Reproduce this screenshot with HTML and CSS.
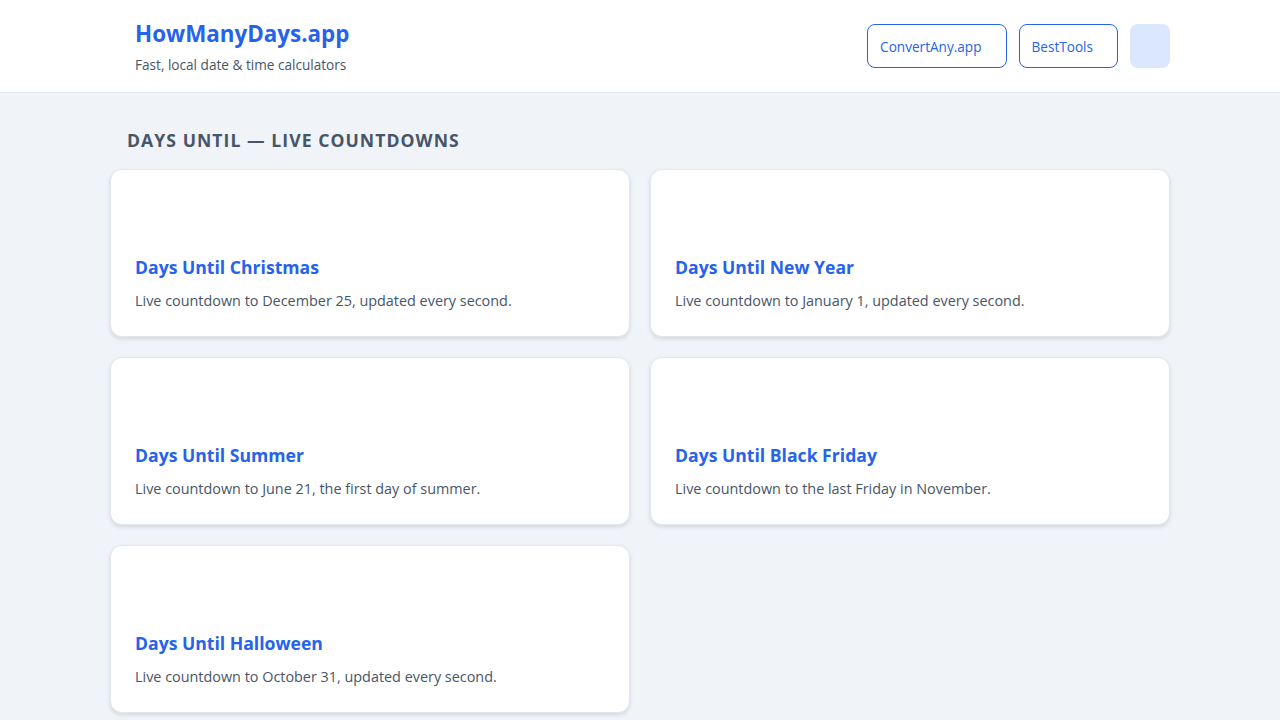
FILE: index.html
```html
<!DOCTYPE html>
<html lang="en">
<head>
    <meta charset="UTF-8">
    <meta name="viewport" content="width=device-width, initial-scale=1.0">
    <title>HowManyDays.app</title>
    <link rel="stylesheet" href="styles.css">
</head>
<body>
    <header class="site-header">
        <div class="header-inner">
            <div class="brand">
                <a class="brand-title" href="#">HowManyDays.app</a>
                <p class="brand-tagline">Fast, local date &amp; time calculators</p>
            </div>
            <nav class="header-nav">
                <a class="nav-link" href="#">ConvertAny.app</a>
                <a class="nav-link" href="#">BestTools</a>
                <button class="theme-toggle" aria-label="Toggle theme"></button>
            </nav>
        </div>
    </header>

    <main class="container">
        <h2 class="section-title">Days Until — Live Countdowns</h2>
        <div class="card-grid">
            <a class="card" href="#">
                <h3 class="card-title">Days Until Christmas</h3>
                <p class="card-desc">Live countdown to December 25, updated every second.</p>
            </a>
            <a class="card" href="#">
                <h3 class="card-title">Days Until New Year</h3>
                <p class="card-desc">Live countdown to January 1, updated every second.</p>
            </a>
            <a class="card" href="#">
                <h3 class="card-title">Days Until Summer</h3>
                <p class="card-desc">Live countdown to June 21, the first day of summer.</p>
            </a>
            <a class="card" href="#">
                <h3 class="card-title">Days Until Black Friday</h3>
                <p class="card-desc">Live countdown to the last Friday in November.</p>
            </a>
            <a class="card" href="#">
                <h3 class="card-title">Days Until Halloween</h3>
                <p class="card-desc">Live countdown to October 31, updated every second.</p>
            </a>
        </div>
    </main>
</body>
</html>
```

FILE: styles.css
```css
body {
    font-family: 'Open Sans', 'Noto Sans', sans-serif;
    background-color: #f0f3f8;
    margin: 0;
    color: #1e293b;
}

a {
    text-decoration: none;
}

.site-header {
    background-color: #fff;
    border-bottom: 1px solid #e2e8f0;
}

.header-inner {
    max-width: 1060px;
    margin: 0 auto;
    padding: 19px 0 17px 25px;
    box-sizing: border-box;
    display: flex;
    justify-content: space-between;
    align-items: center;
}

.brand-title {
    display: block;
    font-size: 1.4rem;
    font-weight: 700;
    color: #2563eb;
    line-height: 30px;
}

.brand-tagline {
    margin: 6px 0 0;
    font-size: 0.85rem;
    color: #475569;
    line-height: 20px;
}

.header-nav {
    display: flex;
    align-items: center;
    gap: 12px;
    margin-top: -2px;
}

.nav-link {
    height: 44px;
    padding: 0 24px 0 12px;
    box-sizing: border-box;
    display: flex;
    align-items: center;
    border: 1px solid #2563eb;
    border-radius: 8px;
    font-size: 0.85rem;
    color: #2563eb;
}

.theme-toggle {
    width: 40px;
    height: 44px;
    border: none;
    border-radius: 8px;
    background-color: #dbe7fd;
    cursor: pointer;
}

.container {
    max-width: 1060px;
    margin: 0 auto;
    padding: 35px 0 40px;
}

.section-title {
    margin: 0 0 17px 17px;
    font-size: 1.1rem;
    font-weight: 700;
    text-transform: uppercase;
    letter-spacing: 1.05px;
    color: #475569;
    line-height: 24px;
}

.card-grid {
    display: grid;
    grid-template-columns: 1fr 1fr;
    gap: 20px;
}

.card {
    height: 168px;
    box-sizing: border-box;
    padding: 0 24px 24px;
    display: flex;
    flex-direction: column;
    justify-content: flex-end;
    background-color: #fff;
    border: 1px solid #e2e8f0;
    border-radius: 12px;
    box-shadow: 0 2px 4px rgba(15, 23, 42, 0.12);
}

.card-title {
    margin: 0 0 11px;
    font-size: 1.1rem;
    font-weight: 700;
    color: #2563eb;
    line-height: 24px;
}

.card-desc {
    margin: 0;
    font-size: 0.9rem;
    color: #475569;
    line-height: 22px;
}
```
